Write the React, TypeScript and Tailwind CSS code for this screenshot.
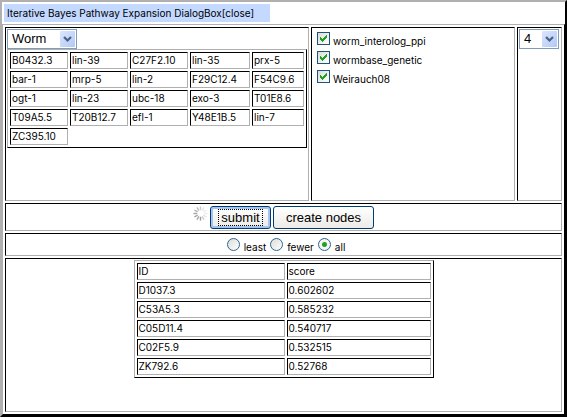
import { useState } from "react";

const genes = [
  ["B0432.3", "lin-39", "C27F2.10", "lin-35", "prx-5"],
  ["bar-1", "mrp-5", "lin-2", "F29C12.4", "F54C9.6"],
  ["ogt-1", "lin-23", "ubc-18", "exo-3", "T01E8.6"],
  ["T09A5.5", "T20B12.7", "efl-1", "Y48E1B.5", "lin-7"],
  ["ZC395.10"],
];

const scores = [
  ["D1037.3", "0.602602"],
  ["C53A5.3", "0.585232"],
  ["C05D11.4", "0.540717"],
  ["C02F5.9", "0.532515"],
  ["ZK792.6", "0.52768"],
];

const spokes = ["#cccccc", "#e6e6e6", "#eeeeee", "#ececec", "#e2e2e2", "#cccccc", "#9a9a9a", "#a6a6a6", "#a0a0a0", "#a4a4a4", "#b0b0b0", "#bcbcbc"];

const inset = "border border-t-black border-l-black border-r-[#b0b0b0] border-b-[#b0b0b0]";
const outset = "border border-t-[#b0b0b0] border-l-[#b0b0b0] border-r-black border-b-black";
const cell = `${inset} h-[17px] p-px text-left font-normal leading-[13px] whitespace-nowrap`;
const grid = `${outset} table-fixed border-separate border-spacing-[2px]`;
const control = "font-['Liberation_Sans',Arial,sans-serif] text-[13px]";

function Select({ label, options, width }: { label: string; options: string[]; width: string }) {
  return (
    <div className={`relative h-5 ${width}`}>
      <select
        aria-label={label}
        className={`${control} block h-5 w-full appearance-none border border-[#7f9db9] bg-white pl-1 leading-[18px] outline-none`}
      >
        {options.map((o) => (
          <option key={o}>{o}</option>
        ))}
      </select>
      <svg className="pointer-events-none absolute top-[2px] right-[2px]" width="15" height="16" viewBox="0 0 15 16" aria-hidden="true">
        <defs>
          <linearGradient id="arrow" x1="0" y1="0" x2="1" y2="1">
            <stop offset="0" stopColor="#dce6fd" />
            <stop offset="1" stopColor="#b0c8f8" />
          </linearGradient>
        </defs>
        <rect width="15" height="16" rx="1" fill="url(#arrow)" />
        <path d="M4 6l3.5 3.5L11 6" fill="none" stroke="#4d6185" strokeWidth="2.2" />
      </svg>
    </div>
  );
}

function Source({ name }: { name: string }) {
  const [on, setOn] = useState(true);
  return (
    <label className="flex h-[19px] items-baseline gap-[3px]">
      <span className="relative inline-block size-[13px]">
        <input
          type="checkbox"
          checked={on}
          onChange={() => setOn(!on)}
          className="block size-[13px] appearance-none border border-[#1c5180] bg-linear-to-br from-[#dcdcd7] to-white"
        />
        {on && (
          <svg className="pointer-events-none absolute inset-0" width="13" height="13" viewBox="0 0 13 13" aria-hidden="true" shapeRendering="crispEdges">
            <path d="M3 5h1v1h1v1h1v-1h1v-1h1v-1h1v-1h1v3h-1v1h-1v1h-1v1h-1v1h-1v-1h-1v-1h-1z" fill="#21a121" />
          </svg>
        )}
      </span>
      <span>{name}</span>
    </label>
  );
}

function Spinner() {
  return (
    <svg width="15" height="15" viewBox="0 0 16 16" role="img" aria-label="loading">
      {spokes.map((c, i) => (
        <line key={i} x1="8" y1="0.5" x2="8" y2="4.5" stroke={c} strokeWidth="1.5" transform={`rotate(${i * 30} 8 8)`} />
      ))}
    </svg>
  );
}

export default function App() {
  const [amount, setAmount] = useState("all");
  return (
    <main className="w-full border-2 border-t-[#b0b0b0] border-r-black border-b-black border-l-[#b0b0b0] bg-white font-[Inter,sans-serif] text-[10px] leading-[13px] text-black">
      <header className="flex h-[22px] items-start p-[2px]">
        <h1 className="h-[18px] min-w-[266px] bg-[#c3d9ff] px-[3px] leading-[18px] whitespace-nowrap">
          Iterative Bayes Pathway Expansion DialogBox<button type="button" className="leading-[18px]">[close]</button>
        </h1>
      </header>

      <div className={`${outset} flex flex-col gap-[2px] p-[2px]`}>
        <div className="grid min-h-[174px] grid-cols-[304fr_204fr_45fr] gap-[2px]">
          <section className={`${inset} min-w-0 p-px`}>
            <Select label="Species" options={["Worm"]} width="w-[70px]" />
            <table className={`${grid} w-full`}>
              <colgroup>
                <col className="w-[58px]" />
                <col className="w-[58px]" />
                <col className="w-[58px]" />
                <col className="w-[60px]" />
                <col />
              </colgroup>
              <tbody>
                {genes.map((row) => (
                  <tr key={row[0]}>
                    {row.map((g) => (
                      <td key={g} className={cell}>{g}</td>
                    ))}
                  </tr>
                ))}
              </tbody>
            </table>
          </section>
          <section className={`${inset} min-w-0 px-[5px] py-1`}>
            <Source name="worm_interolog_ppi" />
            <Source name="wormbase_genetic" />
            <Source name="Weirauch08" />
          </section>
          <section className={`${inset} min-w-0 py-px pr-[2px] pl-px`}>
            <Select label="Count" options={["4"]} width="w-full" />
          </section>
        </div>

        <div className={`${inset} flex items-start justify-center gap-[2px] px-px pt-[2px] pb-px`}>
          <Spinner />
          <button type="button" className={`${control} h-[23px] w-[61px] rounded-[3px] border border-[#003c74] bg-linear-to-b from-white to-[#ecebe6] px-[7px] py-[2px] shadow-[inset_0_0_0_2px_#a6c4f2]`}>
            <span className="block border border-dotted border-black leading-[15px]">submit</span>
          </button>
          <button type="button" className={`${control} h-[23px] w-[101px] rounded-[3px] border border-[#003c74] bg-linear-to-b from-white to-[#ecebe6] leading-[21px]`}>
            create nodes
          </button>
        </div>

        <div className={`${inset} flex h-[23px] items-start justify-center gap-1 pt-1 pl-[5px]`}>
          {["least", "fewer", "all"].map((v) => (
            <label key={v} className="flex items-baseline gap-1">
              <input
                type="radio"
                name="amount"
                checked={amount === v}
                onChange={() => setAmount(v)}
                className="size-[13px] appearance-none rounded-full border border-[#2f6390] bg-linear-to-br from-[#dcdcd7] to-white checked:bg-[radial-gradient(circle,#21a121_2px,#f4f4f2_3px)]"
              />
              <span>{v}</span>
            </label>
          ))}
        </div>

        <div className={`${inset} flex min-h-[154px] items-start justify-center p-px`}>
          <table className={`${grid} w-[300px]`}>
            <colgroup>
              <col className="w-[148px]" />
              <col />
            </colgroup>
            <thead>
              <tr>
                <th className={cell}>ID</th>
                <th className={cell}>score</th>
              </tr>
            </thead>
            <tbody>
              {scores.map(([id, score]) => (
                <tr key={id}>
                  <td className={cell}>{id}</td>
                  <td className={cell}>{score}</td>
                </tr>
              ))}
            </tbody>
          </table>
        </div>
      </div>
    </main>
  );
}
